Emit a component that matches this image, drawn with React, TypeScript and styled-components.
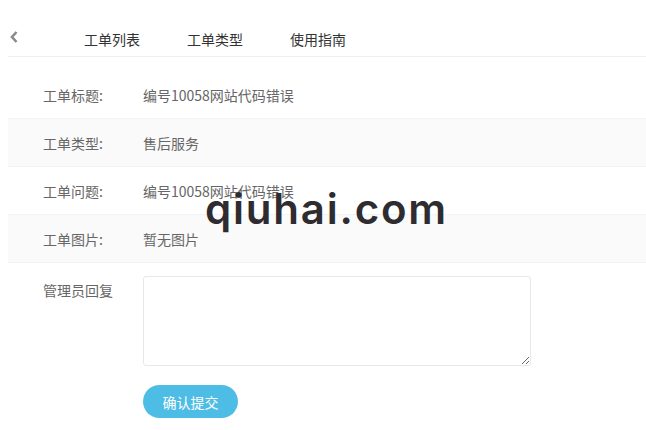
import React from "react";
import styled, { createGlobalStyle } from "styled-components";

const GlobalStyle = createGlobalStyle`
  html, body {
    margin: 0;
    padding: 0;
    background: #fff;
  }
  body {
    font-family: "Noto Sans CJK SC", "Noto Sans", sans-serif;
    color: #666;
  }
`;

const Page = styled.div`
  position: relative;
  width: 646px;
  height: 430px;
  overflow: hidden;
  padding: 0 0 0 8px;
  box-sizing: border-box;
`;

const TabBar = styled.div`
  display: flex;
  align-items: center;
  height: 57px;
  border-bottom: 1px solid #eeeeee;
  box-sizing: border-box;
  padding-top: 22px;
`;

const Back = styled.div`
  width: 12px;
  display: flex;
  justify-content: center;
  margin-right: 64px;
  margin-top: -5px;
  color: #8a8a8a;
`;

const Tab = styled.div`
  font-size: 14px;
  color: #333;
  margin-right: 47px;
  line-height: 20px;
`;

const List = styled.div`
  padding-top: 14px;
`;

const Row = styled.div<{ $shade?: boolean }>`
  display: flex;
  align-items: center;
  height: 48px;
  box-sizing: border-box;
  border-bottom: 1px solid #f3f3f3;
  background: ${(p) => (p.$shade ? "#fafafa" : "#fff")};
  font-size: 14px;
`;

const Label = styled.div`
  width: 100px;
  padding-left: 35px;
  color: #666;
`;

const Value = styled.div`
  color: #666;
`;

const ReplyRow = styled.div`
  display: flex;
  align-items: flex-start;
  padding-top: 13px;
  font-size: 14px;
`;

const ReplyLabel = styled(Label)`
  padding-top: 4px;
`;

const Field = styled.div`
  display: flex;
  flex-direction: column;
  gap: 19px;
`;

const TextArea = styled.textarea`
  width: 388px;
  height: 90px;
  box-sizing: border-box;
  border: 1px solid #e8e8e8;
  border-radius: 3px;
  outline: none;
  font-family: inherit;
`;

const Submit = styled.button`
  width: 95px;
  height: 33px;
  border: none;
  border-radius: 17px;
  background: #4ebde6;
  color: #fff;
  font-size: 14px;
  font-family: inherit;
  cursor: pointer;
`;

const Watermark = styled.div`
  position: absolute;
  left: 205px;
  top: 183px;
  font-family: "Inter", "Noto Sans", sans-serif;
  font-weight: 600;
  font-size: 42px;
  letter-spacing: 1.8px;
  color: #2e2c30;
  pointer-events: none;
`;

const rows = [
  { label: "工单标题:", value: "编号10058网站代码错误" },
  { label: "工单类型:", value: "售后服务" },
  { label: "工单问题:", value: "编号10058网站代码错误" },
  { label: "工单图片:", value: "暂无图片" },
];

export default function App() {
  return (
    <>
      <GlobalStyle />
      <Page>
        <TabBar>
          <Back>
            <svg width="10" height="14" viewBox="0 0 10 14">
              <path d="M7.5 2 L3 7 L7.5 12" fill="none" stroke="currentColor" strokeWidth="2.6" />
            </svg>
          </Back>
          <Tab>工单列表</Tab>
          <Tab>工单类型</Tab>
          <Tab>使用指南</Tab>
        </TabBar>
        <List>
          {rows.map((r, i) => (
            <Row key={r.label} $shade={i % 2 === 1}>
              <Label>{r.label}</Label>
              <Value>{r.value}</Value>
            </Row>
          ))}
        </List>
        <ReplyRow>
          <ReplyLabel>管理员回复</ReplyLabel>
          <Field>
            <TextArea />
            <Submit>确认提交</Submit>
          </Field>
        </ReplyRow>
        <Watermark>qiuhai.com</Watermark>
      </Page>
    </>
  );
}
